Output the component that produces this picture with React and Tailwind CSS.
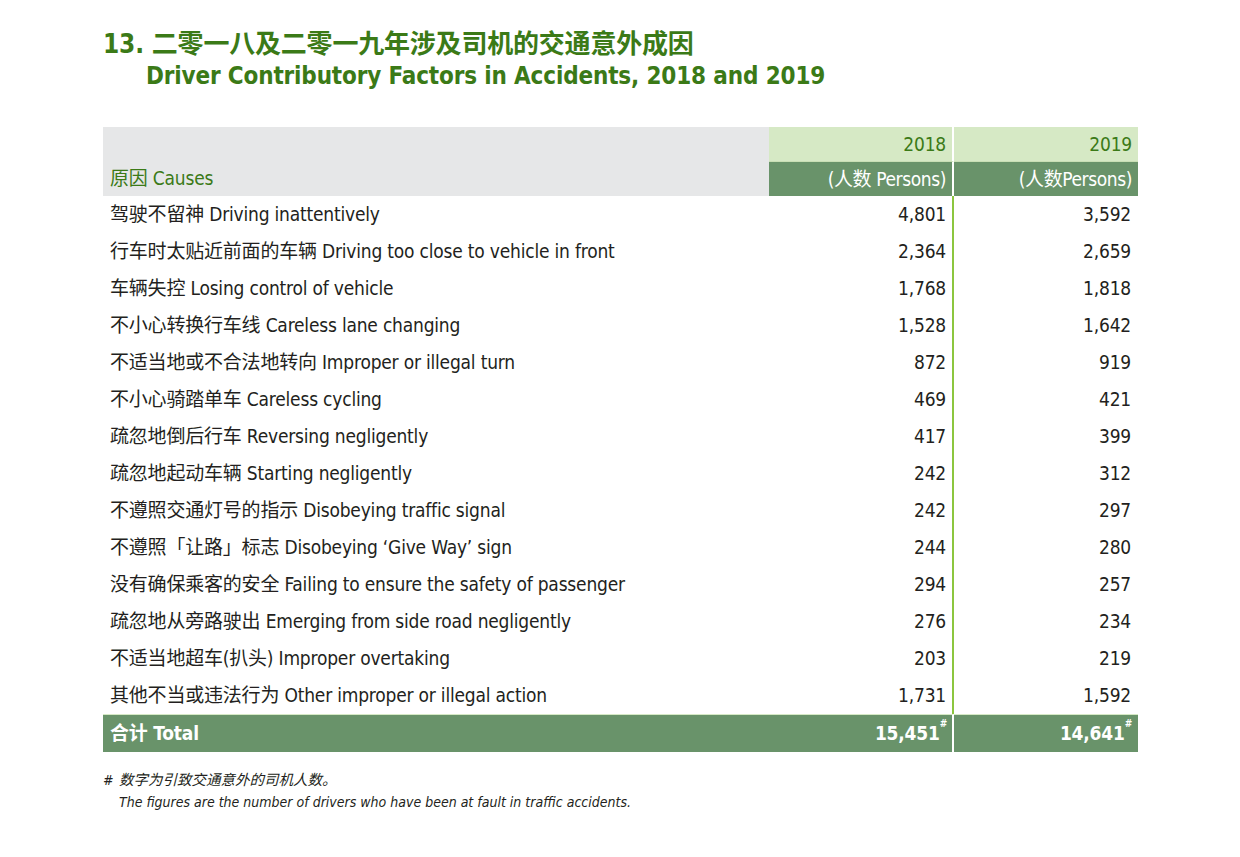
const rows = [
  ["驾驶不留神 Driving inattentively", "4,801", "3,592"],
  ["行车时太贴近前面的车辆 Driving too close to vehicle in front", "2,364", "2,659"],
  ["车辆失控 Losing control of vehicle", "1,768", "1,818"],
  ["不小心转换行车线 Careless lane changing", "1,528", "1,642"],
  ["不适当地或不合法地转向 Improper or illegal turn", "872", "919"],
  ["不小心骑踏单车 Careless cycling", "469", "421"],
  ["疏忽地倒后行车 Reversing negligently", "417", "399"],
  ["疏忽地起动车辆 Starting negligently", "242", "312"],
  ["不遵照交通灯号的指示 Disobeying traffic signal", "242", "297"],
  ["不遵照「让路」标志 Disobeying ‘Give Way’ sign", "244", "280"],
  ["没有确保乘客的安全 Failing to ensure the safety of passenger", "294", "257"],
  ["疏忽地从旁路驶出 Emerging from side road negligently", "276", "234"],
  ["不适当地超车(扒头) Improper overtaking", "203", "219"],
  ["其他不当或违法行为 Other improper or illegal action", "1,731", "1,592"],
];

const font = {
  fontFamily:
    "'Liberation Sans Narrow', 'DejaVu Sans Condensed', 'Noto Sans CJK SC', sans-serif",
};

export default function App() {
  return (
    <div className="w-[1240px] h-[857px] bg-white text-[#231f20]" style={font}>
      <div className="pt-[28px] pl-[103px]">
        {/* Title */}
        <h1 className="text-[26px] font-bold leading-[32px] text-[#3b7a17] tracking-[-0.2px]">
          13. 二零一八及二零一九年涉及司机的交通意外成因
        </h1>
        <h2 className="pl-[43px] text-[24px] font-bold leading-[32px] text-[#3b7a17] tracking-[-0.15px]">
          Driver Contributory Factors in Accidents, 2018 and 2019
        </h2>

        {/* Table */}
        <div className="mt-[35px] w-[1035px] grid grid-cols-[666px_185px_184px] text-[19px] tracking-[-0.2px]">
          {/* header */}
          <div className="row-span-2 bg-[#e6e7e8] flex items-end px-[7px] pb-[3px] h-[69px] text-[#3b7a17] leading-[30px]">
            原因 Causes
          </div>
          <div className="bg-[#d6e9c5] border-r-2 border-white h-[35px] border-b border-b-[#c9dfb5] text-right pr-[6px] text-[#3b7a17] leading-[34px]">
            2018
          </div>
          <div className="bg-[#d6e9c5] h-[35px] border-b border-b-[#c9dfb5] text-right pr-[6px] text-[#3b7a17] leading-[34px]">
            2019
          </div>
          <div className="bg-[#69936a] border-r-2 border-white h-[34px] text-right pr-[6px] text-white leading-[34px] tracking-[-0.4px]">
            (人数 Persons)
          </div>
          <div className="bg-[#69936a] h-[34px] text-right pr-[6px] text-white leading-[34px] tracking-[-0.4px]">
            (人数Persons)
          </div>

          {/* body */}
          {rows.map(([label, a, b]) => (
            <div key={label} className="contents">
              <div className="h-[37px] leading-[37px] pl-[7px] whitespace-nowrap">{label}</div>
              <div className="h-[37px] leading-[37px] text-right pr-[6px] border-r-2 border-[#8cc63f]">
                {a}
              </div>
              <div className="h-[37px] leading-[37px] text-right pr-[7px]">{b}</div>
            </div>
          ))}

          {/* total */}
          <div className="bg-[#69936a] border-t border-[#d6e9c5] h-[38px] leading-[36px] pl-[7px] text-white font-bold">
            合计 Total
          </div>
          <div className="bg-[#69936a] border-t border-[#d6e9c5] border-r-2 border-r-white h-[38px] leading-[36px] text-right pr-[5px] text-white font-bold">
            15,451<sup className="text-[10px] align-[8px]">#</sup>
          </div>
          <div className="bg-[#69936a] border-t border-[#d6e9c5] h-[38px] leading-[36px] text-right pr-[6px] text-white font-bold">
            14,641<sup className="text-[10px] align-[8px]">#</sup>
          </div>
        </div>

        {/* footnote */}
        <div className="mt-[17px] text-[14px] italic leading-[22px]">
          <div>
            <span className="inline-block w-[16px]">#</span>
            <span className="text-[14.5px]">数字为引致交通意外的司机人数。</span>
          </div>
          <div className="pl-[16px]">
            The figures are the number of drivers who have been at fault in traffic accidents.
          </div>
        </div>
      </div>
    </div>
  );
}
